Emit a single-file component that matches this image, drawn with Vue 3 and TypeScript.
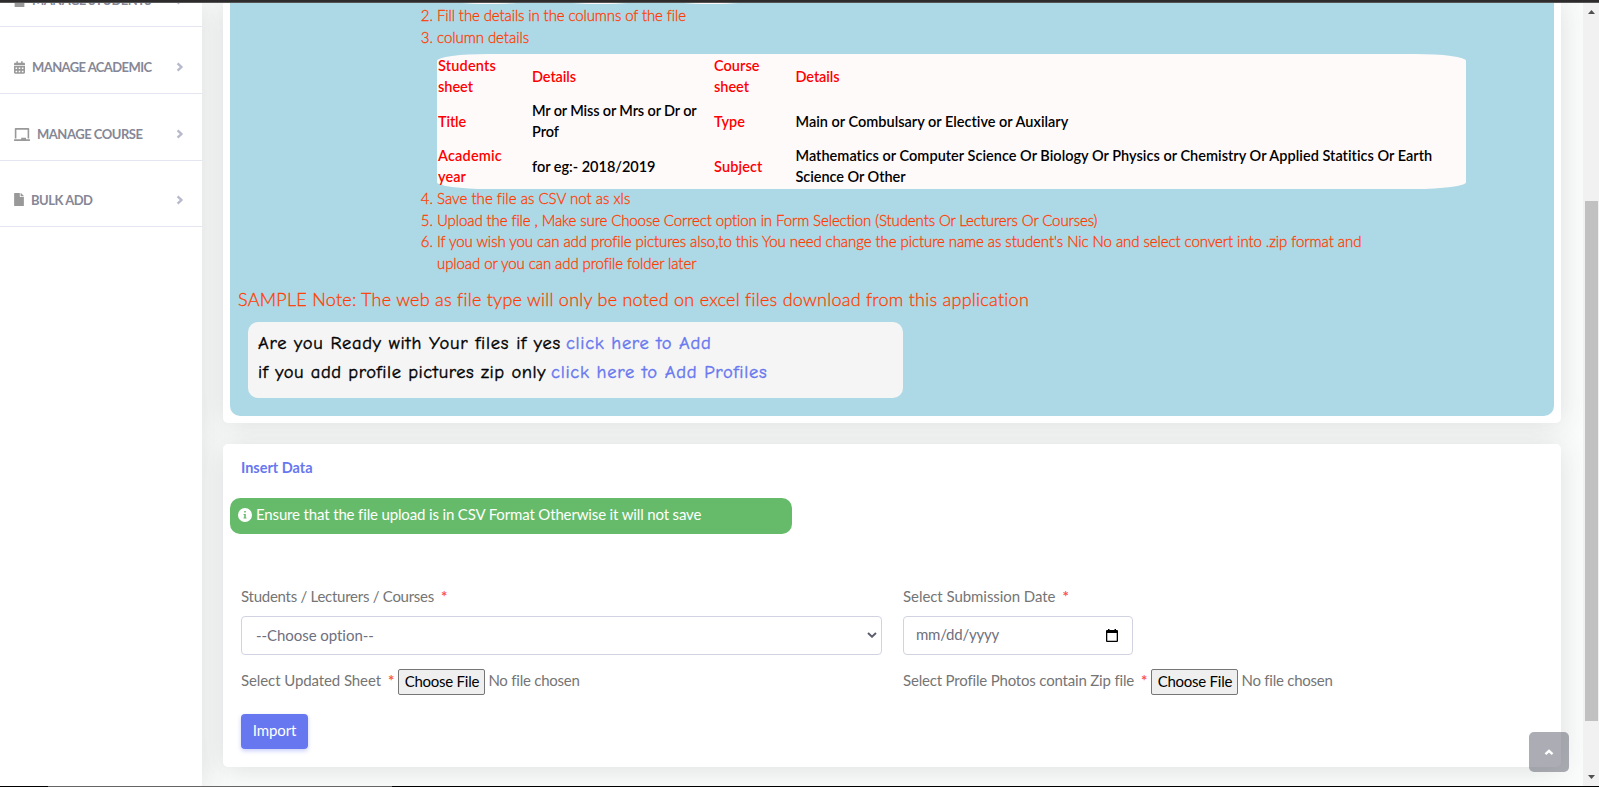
<script setup lang="ts">
interface MenuItem {
  label: string
  icon: 'calendar' | 'laptop' | 'file' | 'student'
  width: number
}

const menu: MenuItem[] = [
  { label: 'MANAGE STUDENTS', icon: 'student', width: 119 },
  { label: 'MANAGE ACADEMIC', icon: 'calendar', width: 119.5 },
  { label: 'MANAGE COURSE', icon: 'laptop', width: 105.5 },
  { label: 'BULK ADD', icon: 'file', width: 61.5 },
]

// Tracks the letters of a line so that it sets to the given width.
const vTrack = {
  mounted(el: HTMLElement, binding: { value: number }) {
    const count = (el.textContent ?? '').length
    const natural = el.getBoundingClientRect().width
    if (count > 0) el.style.letterSpacing = `${(binding.value - natural) / count}px`
  },
}
</script>

<template>
  <div class="screen">
    <aside class="sidebar">
      <a v-for="item in menu" :key="item.label" class="item">
        <svg v-if="item.icon === 'calendar'" class="ico" width="11" height="13" viewBox="0 0 448 512"><path d="M0 464c0 26.500 21.500 48 48 48h352c26.500 0 48-21.500 48-48V192H0v272zm320-196c0-6.600 5.400-12 12-12h40c6.600 0 12 5.400 12 12v40c0 6.600-5.400 12-12 12h-40c-6.600 0-12-5.400-12-12v-40zm0 128c0-6.600 5.400-12 12-12h40c6.600 0 12 5.400 12 12v40c0 6.600-5.400 12-12 12h-40c-6.600 0-12-5.400-12-12v-40zM192 268c0-6.600 5.400-12 12-12h40c6.600 0 12 5.400 12 12v40c0 6.600-5.400 12-12 12h-40c-6.600 0-12-5.400-12-12v-40zm0 128c0-6.600 5.400-12 12-12h40c6.600 0 12 5.400 12 12v40c0 6.600-5.400 12-12 12h-40c-6.600 0-12-5.400-12-12v-40zM64 268c0-6.600 5.400-12 12-12h40c6.600 0 12 5.400 12 12v40c0 6.600-5.400 12-12 12H76c-6.600 0-12-5.400-12-12v-40zm0 128c0-6.600 5.400-12 12-12h40c6.600 0 12 5.400 12 12v40c0 6.600-5.400 12-12 12H76c-6.600 0-12-5.400-12-12v-40zM400 64h-48V16c0-8.800-7.200-16-16-16h-32c-8.800 0-16 7.200-16 16v48H160V16c0-8.800-7.200-16-16-16h-32c-8.800 0-16 7.200-16 16v48H48C21.500 64 0 85.500 0 112v48h448v-48c0-26.500-21.500-48-48-48z" /></svg>
        <svg v-else-if="item.icon === 'laptop'" class="ico" width="16" height="13" viewBox="0 0 640 512"><path d="M96 64h448v352h64V40c0-22.060-17.940-40-40-40H72C49.940 0 32 17.940 32 40v376h64V64zm528 384H480v-64H288v64H16c-8.840 0-16 7.160-16 16v32c0 8.840 7.160 16 16 16h608c8.840 0 16-7.160 16-16v-32c0-8.840-7.160-16-16-16z" /></svg>
        <svg v-else class="ico" :width="item.icon === 'file' ? 10 : 11" height="13" viewBox="0 0 384 512"><path d="M224 136V0H24C10.700 0 0 10.700 0 24v464c0 13.300 10.700 24 24 24h336c13.300 0 24-10.700 24-24V160H248c-13.200 0-24-10.800-24-24zm160-14.100v6.100H256V0h6.100c6.400 0 12.500 2.500 17 7l97.900 98c4.500 4.500 7 10.600 7 16.900z" /></svg>
        <span class="item-label"><span v-track="item.width">{{ item.label }}</span></span>
        <svg class="chev" width="8" height="10" viewBox="0 0 8 10"><path d="M1.600 1.300 5.400 5 1.600 8.700" /></svg>
      </a>
    </aside>

    <main class="content">
      <section class="card help">
        <div class="notice">
          <div class="pills"><i></i><i></i><i></i></div>
          <ol class="steps" start="2">
            <li><span v-track="248.500">Fill the details in the columns of the file</span></li>
            <li>
              <span v-track="92">column details</span>
              <table class="columns">
                <colgroup><col class="c1" /><col class="c2" /><col class="c3" /><col /></colgroup>
                <tbody>
                  <tr>
                    <th><span v-track="58">Students</span><br /><span v-track="35">sheet</span></th>
                    <th><span v-track="44">Details</span></th>
                    <th><span v-track="45.500">Course</span><br /><span v-track="35">sheet</span></th>
                    <th><span v-track="44">Details</span></th>
                  </tr>
                  <tr>
                    <th><span v-track="28">Title</span></th>
                    <td><span v-track="164.500">Mr or Miss or Mrs or Dr or</span><br /><span v-track="27">Prof</span></td>
                    <th><span v-track="31">Type</span></th>
                    <td><span v-track="273">Main or Combulsary or Elective or Auxilary</span></td>
                  </tr>
                  <tr>
                    <th><span v-track="64">Academic</span><br /><span v-track="28">year</span></th>
                    <td><span v-track="123.500">for eg:- 2018/2019</span></td>
                    <th><span v-track="48.500">Subject</span></th>
                    <td><span v-track="637.500">Mathematics or Computer Science Or Biology Or Physics or Chemistry Or Applied Statitics Or Earth</span><br /><span v-track="110">Science Or Other</span></td>
                  </tr>
                </tbody>
              </table>
            </li>
            <li><span v-track="193">Save the file as CSV not as xls</span></li>
            <li><span v-track="660.500">Upload the file , Make sure Choose Correct option in Form Selection (Students Or Lecturers Or Courses)</span></li>
            <li><span v-track="924">If you wish you can add profile pictures also,to this You need change the picture name as student's Nic No and select convert into .zip format and</span><br /><span v-track="259">upload or you can add profile folder later</span></li>
          </ol>
          <p class="sample"><span v-track="790.500">SAMPLE Note: The web as file type will only be noted on excel files download from this application</span></p>
          <div class="ready">
            <p><span v-track="303">Are you Ready with Your files if yes</span><a v-track="145.500">click here to Add</a></p>
            <p><span v-track="288">if you add profile pictures zip only</span><a v-track="216.500">click here to Add Profiles</a></p>
          </div>
        </div>
      </section>

      <section class="card insert">
        <h6><span v-track="71.500">Insert Data</span></h6>
        <div class="alert">
          <svg width="14" height="14" viewBox="0 0 14 14"><circle cx="7" cy="7" r="7" fill="#fff" /><path d="M6.200 3h1.600v1.500H6.200zM5.500 5.900h2.300v3.500h.700v1.100h-3V9.400h.700V7h-.700z" fill="#66bb6a" /></svg>
          <span v-track="445">Ensure that the file upload is in CSV Format Otherwise it will not save</span>
        </div>
        <div class="fields">
          <div>
            <label><span v-track="193">Students / Lecturers / Courses</span><b>*</b></label>
            <div class="control select">
              <span v-track="118">--Choose option--</span>
              <svg width="10" height="6" viewBox="0 0 10 6"><path d="M1 1 5 4.700 9 1" /></svg>
            </div>
          </div>
          <div>
            <label><span v-track="152.500">Select Submission Date</span><b>*</b></label>
            <div class="control date">
              <span v-track="83">mm/dd/yyyy</span>
              <svg width="12" height="13" viewBox="0 0 12 13"><path d="M2 0h1.500v1h5V0H10v1h1a1 1 0 0 1 1 1v10a1 1 0 0 1-1 1H1a1 1 0 0 1-1-1V2a1 1 0 0 1 1-1h1zM1.300 4v7.700h9.400V4z" /></svg>
            </div>
          </div>
          <div class="file">
            <span v-track="140">Select Updated Sheet</span><b>*</b>
            <button class="choose"><span v-track="74.500">Choose File</span></button>
            <span v-track="91">No file chosen</span>
          </div>
          <div class="file">
            <span v-track="230.500">Select Profile Photos contain Zip file</span><b>*</b>
            <button class="choose"><span v-track="74.500">Choose File</span></button>
            <span v-track="91">No file chosen</span>
          </div>
        </div>
        <button class="import"><span v-track="43.500">Import</span></button>
      </section>
    </main>

    <div class="scrollbar">
      <svg width="7" height="4" viewBox="0 0 7 4"><path d="M3.500 0 7 4H0z" /></svg>
      <div class="thumb"></div>
      <svg width="7" height="4" viewBox="0 0 7 4"><path d="M3.500 4 7 0H0z" /></svg>
    </div>

    <a class="to-top"><svg width="10" height="7" viewBox="0 0 10 7"><path d="M1.500 5.200 5 1.800 8.500 5.200" /></svg></a>
    <div class="edge-top"></div>
    <div class="edge-bottom"></div>
  </div>
</template>

<style>
html,
body {
  overflow: hidden;
}
</style>

<style scoped>
* {
  box-sizing: border-box;
}
.screen {
  position: relative;
  display: flex;
  width: 1599px;
  height: 787px;
  overflow: hidden;
  background: #fafcfb;
  color: #757575;
  font: 400 15px/22px Lato, 'Open Sans', sans-serif;
}
span,
a {
  white-space: nowrap;
}
.sidebar {
  flex: none;
  width: 202px;
  background: #fff;
  box-shadow: 0 2px 28px rgba(58, 59, 69, 0.15);
}
.item {
  display: flex;
  align-items: center;
  height: 67px;
  padding: 14px 18px 0 14px;
  border-bottom: 1px solid #e3e6f0;
  font-size: 13px;
  font-weight: 700;
  color: #858796;
}
.item:first-child {
  margin-top: -40px;
}
.item:last-child {
  height: 66px;
  padding-top: 12px;
}
.ico {
  flex: none;
  margin-right: 7px;
  fill: #999;
}
.item-label {
  flex: 1;
}
.chev {
  fill: none;
  stroke: #b7b9cc;
  stroke-width: 2.400;
}
.content {
  position: relative;
  flex: 1;
  overflow: hidden;
  padding: 0 22px 0 21px;
}
.card {
  border-radius: 5px;
  background: #fff;
  box-shadow: 0 2px 28px rgba(58, 59, 69, 0.15);
}
.help {
  height: 423px;
  padding: 0 7px 7px;
}
.notice {
  height: 416px;
  padding: 0 0 0 8px;
  border-radius: 0 0 10px 10px;
  background: #add8e6;
  color: #ff4500;
  font-weight: 300;
  -webkit-text-stroke: 0.300px #ff3a00;
}
.pills {
  display: flex;
  gap: 25px;
  height: 5px;
  padding-left: 208px;
}
.pills i {
  width: 86px;
  height: 4px;
  border-radius: 0 0 43px 43px / 0 0 4px 4px;
  background: #fffafa;
}
.steps {
  width: 1228px;
  margin: 0;
  padding-left: 199px;
  line-height: 21.600px;
}
.columns {
  width: 1029px;
  height: 135px;
  margin-top: 6px;
  border-collapse: collapse;
  border-radius: 5%;
  background: #fffafa;
  color: #000;
  font-size: 14.500px;
  line-height: 21px;
  text-align: left;
  table-layout: fixed;
  -webkit-text-stroke: 0;
}
.columns td,
.columns th {
  padding: 1px 1px 2px;
  font-weight: 600;
}
.columns th {
  color: #f00;
}
.c1 {
  width: 94px;
}
.c2 {
  width: 182px;
}
.c3 {
  width: 81.500px;
}
.steps li:nth-child(n + 3) {
  position: relative;
  top: -1px;
}
.sample {
  margin: 10px 0;
  font-size: 18px;
  line-height: 26px;
}
.ready {
  width: 655px;
  height: 76px;
  margin-left: 10px;
  padding: 7px 10px;
  border-radius: 10px;
  background: #f5f5f5;
  color: #000;
  font: 400 18.500px/29px 'Comic Sans MS', 'Comic Neue', Lato, sans-serif;
  -webkit-text-stroke: 0.400px currentColor;
}
.ready p {
  display: flex;
  gap: 5px;
  margin: 0;
}
.ready a {
  color: #6777ef;
}
.insert {
  height: 323px;
  margin-top: 21px;
  padding: 13px 18px 0;
}
h6 {
  margin: 0;
  color: #6777ef;
  font-size: 14.500px;
  font-weight: 700;
}
.alert {
  display: flex;
  align-items: center;
  gap: 4px;
  width: 562px;
  height: 36px;
  margin: 19px 0 0 -11px;
  padding: 0 8px 4px;
  border-radius: 10px;
  background: #66bb6a;
  color: #fff;
}
.alert svg {
  position: relative;
  top: 1px;
}
.fields {
  display: grid;
  grid-template-columns: 641px 1fr;
  column-gap: 21px;
  margin-top: 51px;
}
label {
  display: block;
  margin-bottom: 9px;
}
b {
  margin-left: 7px;
  color: #fc544b;
  font-weight: 700;
}
.control {
  display: flex;
  align-items: center;
  justify-content: space-between;
  height: 39px;
  border: 1px solid #d1d3e2;
  border-radius: 4px;
  color: #6e707e;
}
.select {
  padding: 0 4px 1px 14px;
}
.select svg {
  fill: none;
  stroke: #5c5e6c;
  stroke-width: 2;
}
.date {
  width: 230px;
  padding: 0 14px 3px 12px;
}
.date svg {
  position: relative;
  top: 1px;
  fill: #000;
}
.file {
  display: flex;
  align-items: center;
  height: 26px;
  margin-top: 14px;
  padding-bottom: 4px;
}
.choose {
  flex: none;
  width: 87px;
  height: 26px;
  margin: 4px 3px 0 4px;
  padding: 0 5px 4px;
  border: 1px solid #767676;
  border-radius: 2px;
  background: #efefef;
  color: #000;
  font: inherit;
}
.import {
  width: 67px;
  height: 35px;
  margin-top: 19px;
  padding: 0 0 3px;
  border: 0;
  border-radius: 4px;
  background: #6777ef;
  box-shadow: 0 2px 4px rgba(103, 119, 239, 0.350);
  color: #fff;
  font: inherit;
}
.scrollbar {
  position: relative;
  display: flex;
  flex: none;
  flex-direction: column;
  align-items: center;
  justify-content: space-between;
  width: 16px;
  padding: 10px 0 8px;
  background: #f1f1f1;
}
.scrollbar svg {
  fill: #505050;
}
.thumb {
  width: 13px;
  height: 520px;
  margin-top: 132px;
  background: #c1c1c1;
}
.to-top {
  position: absolute;
  right: 30px;
  bottom: 15px;
  z-index: 2;
  display: flex;
  align-items: center;
  justify-content: center;
  width: 40px;
  height: 40px;
  border-radius: 5px;
  background: rgba(90, 92, 105, 0.500);
}
.to-top svg {
  fill: none;
  stroke: #fff;
  stroke-width: 2.400;
}
.edge-top {
  position: absolute;
  inset: 0 0 auto;
  z-index: 3;
  height: 3px;
  border-bottom: 1px solid #555;
  background: #2d2b2c;
}
.edge-bottom {
  position: absolute;
  inset: auto 0 0;
  z-index: 3;
  height: 1px;
  background: linear-gradient(90deg, #000 48px, #666 48px 392px, #000 392px);
}
</style>
